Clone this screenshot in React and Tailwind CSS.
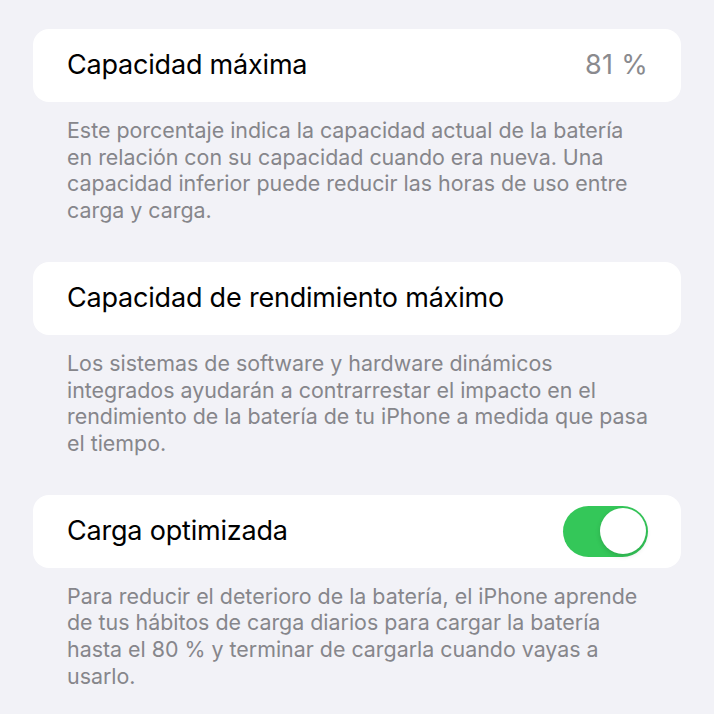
export default function App() {
  const sections = [
    {
      title: "Capacidad máxima",
      value: "81 %",
      lines: [
        "Este porcentaje indica la capacidad actual de la batería",
        "en relación con su capacidad cuando era nueva. Una",
        "capacidad inferior puede reducir las horas de uso entre",
        "carga y carga.",
      ],
    },
    {
      title: "Capacidad de rendimiento máximo",
      lines: [
        "Los sistemas de software y hardware dinámicos",
        "integrados ayudarán a contrarrestar el impacto en el",
        "rendimiento de la batería de tu iPhone a medida que pasa",
        "el tiempo.",
      ],
    },
    {
      title: "Carga optimizada",
      toggle: true,
      lines: [
        "Para reducir el deterioro de la batería, el iPhone aprende",
        "de tus hábitos de carga diarios para cargar la batería",
        "hasta el 80 % y terminar de cargarla cuando vayas a",
        "usarlo.",
      ],
    },
  ];

  return (
    <div
      className="min-h-screen w-full bg-[#f2f2f7] px-[33px] pt-[29px] flex flex-col gap-[38px]"
      style={{ fontFamily: "Inter, 'Noto Sans', sans-serif" }}
    >
      {sections.map((s) => (
        <div key={s.title} className="flex flex-col">
          <div className="h-[73px] bg-white rounded-[16px] flex items-center justify-between pl-[34px] pr-[33px]">
            <span className="text-[27px] text-black tracking-[-0.2px]">{s.title}</span>
            {s.value && <span className="text-[27px] text-[#8a8a8e] tracking-[0.3px]">{s.value}</span>}
            {s.toggle && (
              <div className="w-[85px] h-[51px] rounded-full bg-[#34c759] flex items-center justify-end p-[2.5px]">
                <div className="w-[46px] h-[46px] rounded-full bg-white shadow-[0_2px_5px_rgba(0,0,0,0.15)]" />
              </div>
            )}
          </div>
          <p className="mt-[15px] pl-[34px] text-[21.4px] leading-[26.7px] text-[#86868b]">
            {s.lines.map((l) => (
              <span key={l} className="block whitespace-nowrap">
                {l}
              </span>
            ))}
          </p>
        </div>
      ))}
    </div>
  );
}
